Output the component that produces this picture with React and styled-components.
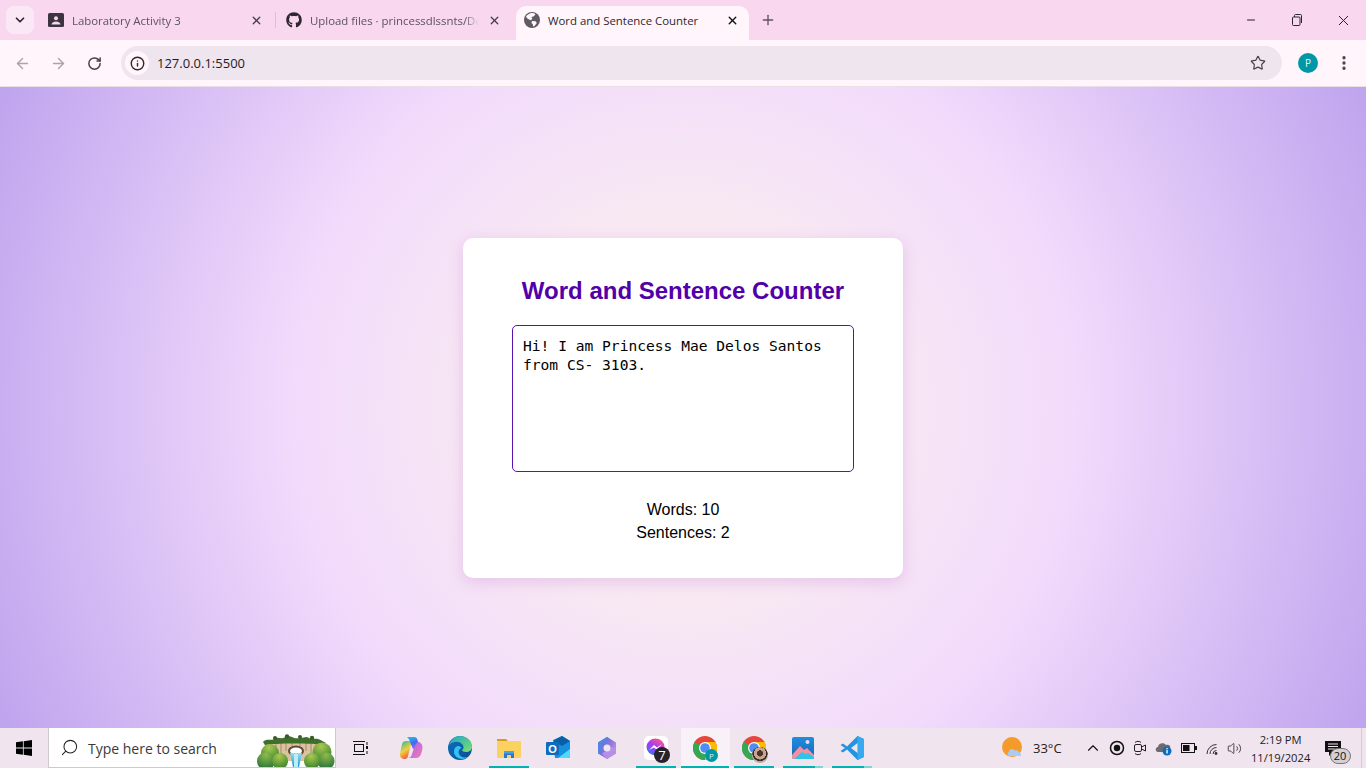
import styled, { createGlobalStyle } from "styled-components";
import { FaGithub } from "react-icons/fa";
import {
  ArrowLeft,
  ArrowRight,
  ChevronDown,
  ChevronUp,
  EllipsisVertical,
  Info,
  Minus,
  Plus,
  RotateCw,
  Search,
  Star,
  Volume2,
  X,
} from "lucide-react";

const GlobalStyle = createGlobalStyle`
  html, body {
    margin: 0;
    padding: 0;
    height: 100%;
    overflow: hidden;
  }
  body {
    font-family: "Liberation Sans", Arial, sans-serif;
  }
`;

const ClassroomIcon = () => (
  <svg width="16" height="16" viewBox="0 0 16 16">
    <rect x="0" y="1" width="16" height="14" rx="1.5" fill="#3c3540" />
    <circle cx="8" cy="6.2" r="2" fill="#f8d7ef" />
    <path d="M3.5 12.4c0-2 2.5-3 4.5-3s4.5 1 4.5 3z" fill="#f8d7ef" />
  </svg>
);

const GlobeIcon = () => (
  <svg width="16" height="16" viewBox="0 0 16 16">
    <circle cx="8" cy="8" r="8" fill="#5f5a63" />
    <path
      d="M6 1.4c2-.6 4-.3 5.500.7L10 4.200 7.500 5 8.400 7l-2 1.200L3 6.200 2 4.400C3 3 4.400 2 6 1.400zM8 9l3.600.3 1.200 1.600-2.200 3.200-1.500.5-.3-2.300L7.400 11z"
      fill="#fff5fa"
    />
  </svg>
);

const RestoreIcon = () => (
  <svg width="12" height="12" viewBox="0 0 12 12" fill="none" stroke="#2c2730">
    <rect x="1.5" y="3" width="7.5" height="8.5" rx="1" />
    <path d="M3.500 3V1.500a1 1 0 0 1 1-1h5a1 1 0 0 1 1 1V9" />
  </svg>
);

const WindowsIcon = () => (
  <svg width="16" height="16" viewBox="0 0 16 16" fill="#000">
    <path d="M0 2.300 6.900 1.300v6.200H0zM7.700 1.200 16 0v7.500H7.700zM0 8.400h6.900v6.300L0 13.700zM7.700 8.400H16V16l-8.300-1.200z" />
  </svg>
);

const ForestArt = () => (
  <svg width="79" height="33" viewBox="0 0 79 33">
    <defs>
      <radialGradient id="bushA" cx="0.45" cy="0.2" r="0.9">
        <stop offset="0" stopColor="#a9c954" />
        <stop offset="0.6" stopColor="#5d9a35" />
        <stop offset="1" stopColor="#2f7438" />
      </radialGradient>
      <radialGradient id="bushB" cx="0.5" cy="0.15" r="0.9">
        <stop offset="0" stopColor="#8fbc48" />
        <stop offset="1" stopColor="#1f6b3c" />
      </radialGradient>
      <linearGradient id="fall" x1="0" y1="0" x2="0" y2="1">
        <stop offset="0" stopColor="#8fe0f2" />
        <stop offset="1" stopColor="#1f94cf" />
      </linearGradient>
    </defs>
    <path d="M9 7h58l3 20H7z" fill="#dcc3a0" />
    <path d="M15 7v18M20 7v16M25 7v14M30 7v10M36 7v5M44 7v5M50 7v10M55 7v14M60 7v16" stroke="#b99f7e" strokeWidth="1.500" />
    <ellipse cx="40" cy="17" rx="8" ry="5.500" fill="#5f4a37" />
    <ellipse cx="40" cy="17" rx="6" ry="3.500" fill="#fff" />
    <path d="M34 19h12l-3 14h-6z" fill="url(#fall)" />
    <path d="M38 20h4v13h-4z" fill="#bdeef8" />
    <path d="M7 8c3-4 8-1 11-3 3-3 6 0 9-1s6-3 9-1 6 1 9 1 5-2 8 0 5 0 9 1 5 3 8 4l-3 2c-8-2-50-2-58 0z" fill="#3f6f2b" />
    <circle cx="19" cy="4" r="2" fill="#355f25" />
    <circle cx="31" cy="2.500" r="2.200" fill="#355f25" />
    <circle cx="44" cy="3" r="2" fill="#355f25" />
    <circle cx="56" cy="4" r="2.200" fill="#355f25" />
    <circle cx="14" cy="19" r="9" fill="url(#bushA)" />
    <circle cx="10" cy="27" r="9" fill="url(#bushB)" />
    <circle cx="24" cy="27" r="8" fill="url(#bushA)" />
    <circle cx="66" cy="18" r="9.500" fill="url(#bushA)" />
    <circle cx="70" cy="27" r="8.500" fill="url(#bushB)" />
    <circle cx="56" cy="27" r="8" fill="url(#bushA)" />
  </svg>
);

const TaskViewIcon = () => (
  <svg width="16" height="16" viewBox="0 0 16 16" fill="none" stroke="#111">
    <rect x="2.500" y="4.500" width="9" height="7" />
    <path d="M1 1.500h12M1 14.500h12M15 2v3M15 11v3" />
    <rect x="14" y="6" width="2" height="3" fill="#111" stroke="none" />
  </svg>
);

const CopilotIcon = () => (
  <svg width="24" height="24" viewBox="0 0 24 24">
    <defs>
      <linearGradient id="copA" x1="0.3" y1="0" x2="0.7" y2="1">
        <stop offset="0" stopColor="#29b6ea" />
        <stop offset="0.5" stopColor="#3d6cf0" />
        <stop offset="1" stopColor="#b55ce6" />
      </linearGradient>
      <linearGradient id="copB" x1="0.3" y1="0" x2="0.7" y2="1">
        <stop offset="0" stopColor="#3dbf8c" />
        <stop offset="0.5" stopColor="#f2cf3f" />
        <stop offset="1" stopColor="#ee4b3c" />
      </linearGradient>
      <linearGradient id="copC" x1="0" y1="0" x2="1" y2="1">
        <stop offset="0" stopColor="#a364ef" />
        <stop offset="1" stopColor="#f27bb5" />
      </linearGradient>
    </defs>
    <path d="M3 8c.6-2 2-3 4-3h4l1 3-3 12c-.5 2-1.500 3-3 3-3 0-5.500-2-5-5z" fill="url(#copB)" />
    <path d="M8 1h7c2 0 3 1 3.500 3L20 10l-6 3-3-7C10.500 4 9.500 2 8 1z" fill="url(#copA)" />
    <path d="M19 6c2 0 4.500 2 4.500 5 0 2-.5 4-1.500 7-.6 2-2 4-5 4H9c2 0 3-1 4-4l2-6 2-4z" fill="url(#copC)" />
  </svg>
);

const EdgeIcon = () => (
  <svg width="24" height="24" viewBox="0 0 24 24">
    <defs>
      <linearGradient id="edgeA" x1="0" y1="0" x2="1" y2="1">
        <stop offset="0" stopColor="#1ba6c9" />
        <stop offset="1" stopColor="#7fe36a" />
      </linearGradient>
      <linearGradient id="edgeB" x1="0" y1="0" x2="1" y2="1">
        <stop offset="0" stopColor="#0f6fc0" />
        <stop offset="1" stopColor="#0a4d94" />
      </linearGradient>
    </defs>
    <circle cx="12" cy="12" r="12" fill="url(#edgeB)" />
    <path d="M1 9C3 3 8 0 12 0c7 0 12 5 12 11 0 3-3 5-6 5-2 0-4-1-4-2 2-1 2-4 0-6-3-3-9-3-13 1z" fill="url(#edgeA)" />
    <path d="M11 10c-3 0-5 2-5 6 0 4 4 7 8 7 2 0 4-1 5-2-3 1-7 0-8-3-1-2 0-6 3-6z" fill="#35c1f1" />
  </svg>
);

const ExplorerIcon = () => (
  <svg width="24" height="24" viewBox="0 0 24 24">
    <path d="M0 3h9l2 2H0z" fill="#d99a1e" />
    <rect x="0" y="5" width="24" height="17" rx="1" fill="#fbd25f" />
    <path d="M7 22v-6h10v6h-3v-3h-4v3z" fill="#2a78c7" />
    <rect x="7" y="15" width="10" height="2.500" fill="#4aa3e0" />
  </svg>
);

const OutlookIcon = () => (
  <svg width="24" height="24" viewBox="0 0 24 24">
    <path d="M7 4 16 0l8 5v15a2 2 0 0 1-2 2H9z" fill="#1490df" />
    <path d="M16 0l8 5-8 5-9-5z" fill="#0a5ea8" />
    <path d="M12 22l12-9v7a2 2 0 0 1-2 2z" fill="#50d9ff" />
    <rect x="0" y="6" width="13" height="13" rx="1" fill="#0f6cbd" />
    <text x="6.500" y="16.500" textAnchor="middle" fontSize="11" fontWeight="700" fill="#fff" fontFamily="Liberation Sans">O</text>
  </svg>
);

const HubIcon = () => (
  <svg width="20" height="22" viewBox="0 0 20 22">
    <defs>
      <linearGradient id="hubA" x1="0" y1="0.2" x2="1" y2="0.8">
        <stop offset="0" stopColor="#3f7ed8" />
        <stop offset="0.5" stopColor="#8a72d8" />
        <stop offset="1" stopColor="#c29ae8" />
      </linearGradient>
    </defs>
    <path d="M10 0l9 5.500v11L10 22l-9-5.500v-11z" fill="url(#hubA)" />
    <path d="M1 5.500 10 0l3 2-8 5v9.500l-4-.5z" fill="#5a80e0" />
    <path d="M5 16.500 14 11v-1l5 1v5.500L10 22z" fill="#b78fe6" />
    <circle cx="10" cy="11" r="3.500" fill="#f0e4ef" />
  </svg>
);

const MessengerIcon = () => (
  <svg width="24" height="24" viewBox="0 0 24 24">
    <defs>
      <linearGradient id="msgA" x1="0.2" y1="1" x2="0.8" y2="0">
        <stop offset="0" stopColor="#2f78f5" />
        <stop offset="0.5" stopColor="#a43cf0" />
        <stop offset="1" stopColor="#ff5a8a" />
      </linearGradient>
    </defs>
    <rect width="24" height="24" rx="5" fill="#fff" />
    <ellipse cx="11.500" cy="11" rx="9" ry="8.500" fill="url(#msgA)" />
    <path d="M5 14l5-5 3 2.500L18 8l-5 6-3-2.500z" fill="#fff" />
  </svg>
);

const ChromeIcon = () => (
  <svg width="24" height="24" viewBox="0 0 24 24">
    <circle cx="12" cy="12" r="12" fill="#e8453c" />
    <path d="M12 24A12 12 0 0 1 1.600 6L12 12z" fill="#35a853" />
    <path d="M12 24A12 12 0 0 0 22.400 6H12z" fill="#fbbc04" />
    <path d="M1.600 6 7 15l5-3z" fill="#35a853" />
    <circle cx="12" cy="12" r="6" fill="#fff" />
    <circle cx="12" cy="12" r="4.800" fill="#4f8ef0" />
  </svg>
);

const PhotosIcon = () => (
  <svg width="22" height="22" viewBox="0 0 22 22">
    <defs>
      <linearGradient id="phA" x1="0" y1="0" x2="0" y2="1">
        <stop offset="0" stopColor="#1e8ee0" />
        <stop offset="1" stopColor="#1565b8" />
      </linearGradient>
    </defs>
    <rect width="22" height="22" rx="2" fill="url(#phA)" />
    <circle cx="15.500" cy="5" r="2" fill="#f3d8e8" />
    <path d="M0 18l8-9 4 4 3-2 7 7v2a2 2 0 0 1-2 2H2a2 2 0 0 1-2-2z" fill="#f38fa0" />
    <path d="M2 22l8-7 3 2 3-1 6 4v2z" fill="#2fc3e8" />
  </svg>
);

const VsCodeIcon = () => (
  <svg width="24" height="24" viewBox="0 0 24 24">
    <path d="M17.500 0 24 3v18l-6.500 3L7 13.500l-4 3-2.500-1.500L5 12 .5 9 3 7.500l4 3z" fill="#2294e0" />
    <path d="M17.500 0 24 3v18l-6.500 3z" fill="#38a9ee" />
    <path d="M17.500 7 11 12l6.500 5z" fill="#f0e4ef" />
  </svg>
);

const WeatherIcon = () => (
  <svg width="22" height="22" viewBox="0 0 22 22">
    <circle cx="10" cy="10" r="10" fill="#f59b2c" />
    <path d="M8 19c-2.500 0-3.500-3-1-4 0-3 4-4 5.500-1.500 3-1 5 1 4.500 2.500 2.500 0 3 3 .5 3z" fill="#a9cdf2" />
  </svg>
);

const RecordIcon = () => (
  <svg width="16" height="16" viewBox="0 0 16 16">
    <circle cx="8" cy="8" r="6.500" fill="none" stroke="#111" strokeWidth="1.500" />
    <circle cx="8" cy="8" r="3.200" fill="#111" />
  </svg>
);

const MeetIcon = () => (
  <svg width="14" height="16" viewBox="0 0 14 16" fill="none" stroke="#222">
    <rect x="1.500" y="4.500" width="7" height="7" rx="1.500" />
    <path d="M8.500 7l4-2v6l-4-2M2 2.500c1-1.500 5-1.500 6 0M2 13.500c1 1.500 5 1.500 6 0" />
  </svg>
);

const DriveIcon = () => (
  <svg width="18" height="16" viewBox="0 0 18 16">
    <path d="M3 12C0 12 0 7 3 7c0-4 6-5 8-2 3-1 5 1 4 3v4z" fill="#6d6a70" />
    <circle cx="12" cy="11" r="4.500" fill="#0f6cbd" />
    <rect x="11.400" y="10" width="1.300" height="3.500" fill="#fff" />
    <rect x="11.400" y="8" width="1.300" height="1.300" fill="#fff" />
  </svg>
);

const BatteryIcon = () => (
  <svg width="16" height="10" viewBox="0 0 16 10">
    <rect x="0.500" y="0.500" width="13" height="9" fill="none" stroke="#111" />
    <rect x="2" y="2" width="6.500" height="6" fill="#111" />
    <rect x="14" y="3" width="2" height="4" fill="#111" />
  </svg>
);

const WifiIcon = () => (
  <svg width="14" height="14" viewBox="0 0 14 14" fill="none" stroke="#333">
    <path d="M8 13a3.500 3.500 0 0 1 3.500-3.500M5 13a6.500 6.500 0 0 1 6.500-6.500M2 13a9.500 9.500 0 0 1 9.500-9.500" />
    <circle cx="11" cy="12.500" r="1.400" fill="#333" stroke="none" />
  </svg>
);

const NotificationIcon = () => (
  <svg width="16" height="15" viewBox="0 0 16 15">
    <path d="M0 0h16v11H8l-4 4v-4H0z" fill="#111" />
    <path d="M3 3h10M3 5.500h10M3 8h7" stroke="#f0e4ef" />
  </svg>
);

const App = () => {
  return (
    <Screen>
      <GlobalStyle />
      <TabStrip>
        <TabSearch>
          <ChevronDown size={14} strokeWidth={3} color="#2c2730" />
        </TabSearch>
        <Tab $width={231}>
          <ClassroomIcon />
          <TabTitle>Laboratory Activity 3</TabTitle>
          <TabClose>
            <X size={13} strokeWidth={2.4} />
          </TabClose>
        </Tab>
        <TabDivider />
        <Tab $width={231}>
          <FaGithub size={16} color="#2c2730" />
          <TabTitle>Upload files · princessdlssnts/De</TabTitle>
          <TabClose>
            <X size={13} strokeWidth={2.4} />
          </TabClose>
        </Tab>
        <ActiveTab>
          <GlobeIcon />
          <ActiveTitle>Word and Sentence Counter</ActiveTitle>
          <TabClose>
            <X size={13} strokeWidth={2.6} color="#111" />
          </TabClose>
        </ActiveTab>
        <NewTab>
          <Plus size={16} strokeWidth={2} color="#5c5460" />
        </NewTab>
        <WindowControls>
          <WindowButton>
            <Minus size={12} strokeWidth={2} color="#222" />
          </WindowButton>
          <WindowButton>
            <RestoreIcon />
          </WindowButton>
          <WindowButton>
            <X size={17} strokeWidth={1.4} color="#222" />
          </WindowButton>
        </WindowControls>
      </TabStrip>

      <Toolbar>
        <NavButton>
          <ArrowLeft size={17} strokeWidth={2} color="#aaa4ab" />
        </NavButton>
        <NavButton>
          <ArrowRight size={17} strokeWidth={2} color="#aaa4ab" />
        </NavButton>
        <NavButton>
          <RotateCw size={15} strokeWidth={2.4} color="#48424c" />
        </NavButton>
        <Omnibox>
          <SiteInfo>
            <Info size={15} strokeWidth={2.2} color="#2c2730" />
          </SiteInfo>
          <Url>127.0.0.1:5500</Url>
          <Star size={16} strokeWidth={1.8} color="#48424c" />
        </Omnibox>
        <Avatar>P</Avatar>
        <MenuButton>
          <EllipsisVertical size={18} strokeWidth={2.4} color="#48424c" />
        </MenuButton>
      </Toolbar>

      <Page>
        <Card>
          <Title>Word and Sentence Counter</Title>
          <TextBox
            readOnly
            defaultValue="Hi! I am Princess Mae Delos Santos from CS- 3103."
          />
          <Results>
            <p>Words: 10</p>
            <p>Sentences: 2</p>
          </Results>
        </Card>
      </Page>

      <Taskbar>
        <StartButton>
          <WindowsIcon />
        </StartButton>
        <SearchBox>
          <SearchGlass>
            <Search size={19} strokeWidth={1.3} color="#222" />
          </SearchGlass>
          <SearchText>Type here to search</SearchText>
          <SearchArt>
            <ForestArt />
          </SearchArt>
        </SearchBox>
        <TaskViewSlot>
          <TaskViewIcon />
        </TaskViewSlot>
        <TaskSlot>
          <CopilotIcon />
        </TaskSlot>
        <TaskSlot>
          <EdgeIcon />
        </TaskSlot>
        <TaskSlot $open>
          <ExplorerIcon />
        </TaskSlot>
        <TaskSlot>
          <OutlookIcon />
        </TaskSlot>
        <TaskSlot>
          <HubIcon />
        </TaskSlot>
        <TaskSlot $open>
          <MessengerIcon />
          <CountBadge>7</CountBadge>
        </TaskSlot>
        <TaskSlot $open $active>
          <ChromeIcon />
          <ProfileBadge>P</ProfileBadge>
        </TaskSlot>
        <TaskSlot $open>
          <ChromeIcon />
          <PhotoBadge />
        </TaskSlot>
        <TaskSlot $open $stacked>
          <PhotosIcon />
        </TaskSlot>
        <TaskSlot $open $stacked>
          <VsCodeIcon />
        </TaskSlot>

        <Tray>
          <WeatherIcon />
          <Temperature>33°C</Temperature>
          <TrayIcons>
            <ChevronUp size={18} strokeWidth={1.5} color="#111" />
            <RecordIcon />
            <MeetIcon />
            <DriveIcon />
            <BatteryIcon />
            <WifiIcon />
            <Volume2 size={15} strokeWidth={1.3} color="#222" />
          </TrayIcons>
          <Clock>
            <span>2:19 PM</span>
            <span>11/19/2024</span>
          </Clock>
          <Notifications>
            <NotificationIcon />
            <NotificationCount>20</NotificationCount>
          </Notifications>
        </Tray>
        <ShowDesktop />
      </Taskbar>
    </Screen>
  );
};

const Screen = styled.div`
  width: 1366px;
  height: 768px;
  display: flex;
  flex-direction: column;
  overflow: hidden;
`;

const TabStrip = styled.div`
  height: 40px;
  flex: none;
  display: flex;
  align-items: flex-end;
  padding-left: 6px;
  background: #f8d7ef;
  font-family: "Open Sans", sans-serif;
`;

const TabSearch = styled.div`
  width: 28px;
  height: 28px;
  margin: 0 10px 6px 0;
  display: flex;
  align-items: center;
  justify-content: center;
  background: #fbe8f6;
  border-radius: 8px;
`;

const Tab = styled.div`
  width: ${(p) => p.$width}px;
  height: 34px;
  box-sizing: border-box;
  padding: 0 11px 6px 4px;
  display: flex;
  align-items: center;
  flex: none;
`;

const TabTitle = styled.span`
  flex: 1;
  min-width: 0;
  margin: 0 4px 0 8px;
  font-size: 11.4px;
  color: #5a5360;
  white-space: nowrap;
  -webkit-mask-image: linear-gradient(to right, #000 90%, transparent 98%);
  mask-image: linear-gradient(to right, #000 90%, transparent 98%);
`;

const TabClose = styled.div`
  width: 16px;
  display: flex;
  justify-content: center;
  color: #443d48;
`;

const TabDivider = styled.div`
  width: 1px;
  height: 16px;
  margin: 0 6px 12px 0;
  background: #eab7e2;
`;

const ActiveTab = styled.div`
  width: 233px;
  height: 34px;
  margin-left: 3px;
  box-sizing: border-box;
  padding: 0 9px 6px 8px;
  display: flex;
  align-items: center;
  background: #fff5fa;
  border-radius: 10px 10px 0 0;
`;

const ActiveTitle = styled.span`
  flex: 1;
  margin-left: 8px;
  font-size: 11.4px;
  color: #2c2730;
  white-space: nowrap;
`;

const NewTab = styled.div`
  width: 16px;
  margin: 0 0 12px 11px;
  display: flex;
`;

const WindowControls = styled.div`
  display: flex;
  margin-left: auto;
  align-self: stretch;
`;

const WindowButton = styled.div`
  width: 46px;
  display: flex;
  align-items: center;
  justify-content: center;
`;

const Toolbar = styled.div`
  height: 46px;
  flex: none;
  display: flex;
  align-items: center;
  padding-left: 4px;
  background: #fff5fa;
  border-bottom: 1px solid #e9dfe9;
`;

const NavButton = styled.div`
  width: 36px;
  display: flex;
  justify-content: center;
`;

const Omnibox = styled.div`
  width: 1161px;
  height: 34px;
  margin-left: 9px;
  box-sizing: border-box;
  padding: 0 16px 0 4px;
  display: flex;
  align-items: center;
  background: #efe5ee;
  border-radius: 17px;
`;

const SiteInfo = styled.div`
  width: 24px;
  height: 24px;
  display: flex;
  align-items: center;
  justify-content: center;
  background: #fff5fa;
  border-radius: 50%;
`;

const Url = styled.span`
  flex: 1;
  margin-left: 8px;
  font-family: "Open Sans", sans-serif;
  font-size: 13px;
  color: #1f1b24;
`;

const Avatar = styled.div`
  width: 20px;
  height: 20px;
  margin-left: 16px;
  display: flex;
  align-items: center;
  justify-content: center;
  background: #0097a7;
  border-radius: 50%;
  color: #e8f7f8;
  font-family: "Open Sans", sans-serif;
  font-size: 10px;
`;

const MenuButton = styled.div`
  width: 18px;
  margin-left: 17px;
  display: flex;
`;

const Page = styled.main`
  flex: 1;
  min-height: 0;
  display: flex;
  align-items: center;
  justify-content: center;
  background: radial-gradient(
    circle at 50% 50%,
    #f9eeef 0%,
    #f7e8f3 27%,
    #f2dafc 52%,
    #bfa4ee 100%
  );
`;

const Card = styled.section`
  width: 440px;
  height: 340px;
  box-sizing: border-box;
  padding: 36px 49px 0;
  background: #fff;
  border-radius: 10px;
  box-shadow: 0 4px 15px rgba(170, 60, 190, 0.2);
`;

const Title = styled.h1`
  margin: 0 0 18px;
  font-size: 24px;
  line-height: 33px;
  font-weight: 700;
  text-align: center;
  color: #5200a8;
`;

const TextBox = styled.textarea`
  display: block;
  width: 342px;
  height: 147px;
  box-sizing: border-box;
  padding: 10px;
  margin: 0;
  border: 1px solid #5a12b0;
  border-radius: 5px;
  outline: none;
  resize: none;
  overflow: hidden;
  font-family: "DejaVu Sans Mono", monospace;
  font-size: 14.6px;
  line-height: 19px;
  color: #000;
`;

const Results = styled.div`
  margin-top: 26px;
  text-align: center;
  font-size: 16px;
  line-height: 23px;
  color: #000;

  p {
    margin: 0;
  }
`;

const Taskbar = styled.footer`
  height: 40px;
  flex: none;
  display: flex;
  align-items: stretch;
  background: #f0e4ef;
`;

const StartButton = styled.div`
  width: 48px;
  display: flex;
  align-items: center;
  justify-content: center;
`;

const SearchBox = styled.div`
  width: 288px;
  box-sizing: border-box;
  padding-left: 11px;
  display: flex;
  align-items: center;
  background: #fff;
  border: 1px solid #cfc8ce;
  border-top: none;
  overflow: hidden;
`;

const SearchGlass = styled.div`
  display: flex;
  transform: scaleX(-1);
`;

const SearchText = styled.span`
  margin-left: 9px;
  padding-top: 2px;
  flex: 1;
  font-family: "Open Sans", sans-serif;
  font-size: 14px;
  color: #3a3a3a;
`;

const SearchArt = styled.div`
  align-self: flex-end;
  display: flex;
`;

const TaskViewSlot = styled.div`
  width: 51px;
  padding-right: 3px;
  box-sizing: border-box;
  display: flex;
  align-items: center;
  justify-content: center;
`;

const TaskSlot = styled.div`
  position: relative;
  width: 49px;
  box-sizing: border-box;
  padding-right: 1px;
  display: flex;
  align-items: center;
  justify-content: center;
  background: ${(p) => (p.$active ? "#f8f2f8" : "transparent")};

  &::after {
    content: "";
    display: ${(p) => (p.$open ? "block" : "none")};
    position: absolute;
    bottom: 0;
    left: ${(p) => (p.$active ? "0" : "4px")};
    right: ${(p) => (p.$active ? "1px" : "5px")};
    height: 2px;
    background: ${(p) =>
      p.$stacked
        ? "linear-gradient(to right, #00b4b4 80%, #7fd6d6 80%)"
        : "#00b4b4"};
  }
`;

const CountBadge = styled.span`
  position: absolute;
  right: 11px;
  bottom: 5px;
  width: 16px;
  height: 16px;
  display: flex;
  align-items: center;
  justify-content: center;
  background: #26242a;
  border-radius: 50%;
  color: #fff;
  font-family: "Open Sans", sans-serif;
  font-size: 13px;
`;

const ProfileBadge = styled.span`
  position: absolute;
  right: 12px;
  bottom: 6px;
  width: 13px;
  height: 13px;
  display: flex;
  align-items: center;
  justify-content: center;
  background: #0097a7;
  border-radius: 50%;
  color: #d8f3f5;
  font-family: "Open Sans", sans-serif;
  font-size: 8px;
`;

const PhotoBadge = styled.span`
  position: absolute;
  right: 11px;
  bottom: 5px;
  width: 16px;
  height: 16px;
  background: radial-gradient(circle at 50% 40%, #4a342c 0 24%, #c9a48f 26% 48%, #3b2c28 50% 60%, #b9aca0 62%);
  border-radius: 50%;
`;

const Tray = styled.div`
  flex: 1;
  display: flex;
  align-items: center;
  padding-left: 125px;
`;

const Temperature = styled.span`
  margin-left: 9px;
  font-family: "Open Sans", sans-serif;
  font-size: 13px;
  color: #222;
`;

const TrayIcons = styled.div`
  width: 158px;
  margin-left: 22px;
  display: flex;
  align-items: center;
  justify-content: space-between;
`;

const Clock = styled.div`
  width: 72px;
  margin-left: 3px;
  display: flex;
  flex-direction: column;
  align-items: center;
  gap: 3px;
  font-family: "Open Sans", sans-serif;
  font-size: 11.2px;
  line-height: 15px;
  color: #222;
`;

const Notifications = styled.div`
  position: relative;
  margin-left: 8px;
  display: flex;
`;

const NotificationCount = styled.span`
  position: absolute;
  left: 5px;
  top: 7px;
  width: 21px;
  height: 16px;
  display: flex;
  align-items: center;
  justify-content: center;
  background: #d6d0d5;
  border: 1px solid #777;
  border-radius: 9px;
  box-sizing: border-box;
  font-family: "Open Sans", sans-serif;
  font-size: 11px;
  color: #111;
`;

const ShowDesktop = styled.div`
  width: 4px;
  flex: none;
  border-left: 1px solid #d6c9d6;
`;

export default App;
